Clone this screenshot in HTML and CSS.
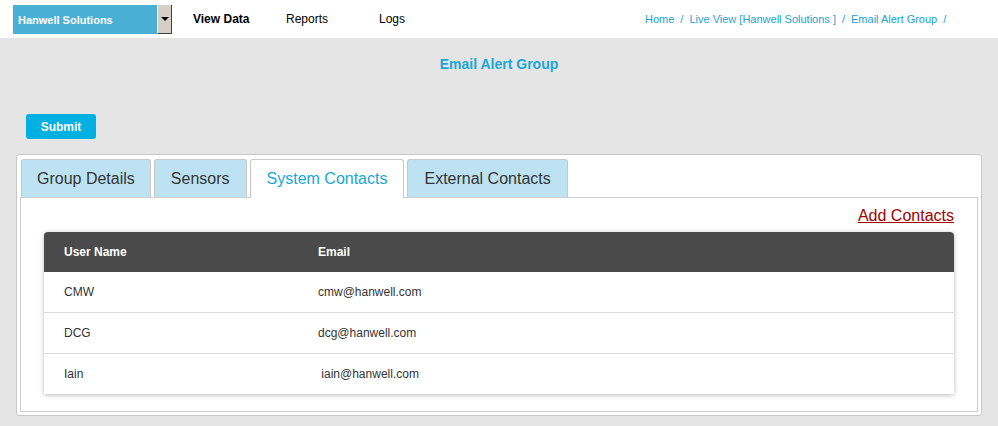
FILE: index.html
```html
<!DOCTYPE html>
<html lang="en">
<head>
    <meta charset="UTF-8">
    <meta name="viewport" content="width=device-width, initial-scale=1.0">
    <title>Email Alert Group</title>
    <link rel="stylesheet" href="styles.css">
</head>
<body>

<div class="topbar">
    <div class="site-select">
        <span class="site-name">Hanwell Solutions</span>
        <span class="site-arrow"><span class="caret"></span></span>
    </div>
    <ul class="nav">
        <li class="nav-item active">View Data</li>
        <li class="nav-item">Reports</li>
        <li class="nav-item">Logs</li>
    </ul>
    <div class="breadcrumb">
        <a href="#">Home</a><span class="sep">/</span>
        <a href="#">Live View [Hanwell Solutions ]</a><span class="sep">/</span>
        <a href="#">Email Alert Group</a><span class="sep">/</span>
    </div>
</div>

<div class="page">
    <h1 class="page-title">Email Alert Group</h1>

    <button class="submit-btn">Submit</button>

    <div class="panel">
        <ul class="tabs">
            <li class="tab">Group Details</li>
            <li class="tab">Sensors</li>
            <li class="tab active">System Contacts</li>
            <li class="tab">External Contacts</li>
        </ul>
        <div class="tab-body">
            <div class="add-row">
                <a href="#" class="add-link">Add Contacts</a>
            </div>
            <table class="contacts">
                <thead>
                    <tr><th class="col-user">User Name</th><th>Email</th></tr>
                </thead>
                <tbody>
                    <tr><td>CMW</td><td>cmw@hanwell.com</td></tr>
                    <tr><td>DCG</td><td>dcg@hanwell.com</td></tr>
                    <tr><td>Iain</td><td>&nbsp;iain@hanwell.com</td></tr>
                </tbody>
            </table>
        </div>
    </div>
</div>

</body>
</html>
```

FILE: styles.css
```css
body {
    margin: 0;
    background-color: #e5e5e5;
    font-family: "Liberation Sans", Arial, sans-serif;
    color: #333;
}

/* top bar */
.topbar {
    display: flex;
    align-items: center;
    height: 38px;
    padding-left: 13px;
    background-color: #fff;
}

.site-select {
    display: flex;
    width: 159px;
    height: 29px;
    margin-top: 1px;
}

.site-name {
    flex: 1;
    display: flex;
    align-items: center;
    padding-left: 5px;
    background-color: #4aafd5;
    color: #fff;
    font-size: 11px;
    font-weight: bold;
}

.site-arrow {
    display: flex;
    align-items: center;
    justify-content: center;
    width: 13px;
    background-color: #d4d0c8;
    border-left: 1px solid #fff;
    border-right: 1px solid #404040;
    border-bottom: 1px solid #404040;
}

.caret {
    width: 0;
    height: 0;
    border-left: 4px solid transparent;
    border-right: 4px solid transparent;
    border-top: 4px solid #000;
}

.nav {
    display: flex;
    list-style: none;
    margin: 0 0 0 21px;
    padding: 0;
}

.nav-item {
    width: 93px;
    font-size: 12px;
    color: #000;
}

.nav-item.active {
    font-weight: bold;
}

.breadcrumb {
    display: flex;
    margin-left: 173px;
    font-size: 11px;
}

.breadcrumb a {
    color: #1ba1d9;
    text-decoration: none;
}

.breadcrumb .sep {
    color: #1ba1d9;
    margin: 0 6px;
}

/* page */
.page {
    padding: 0 16px 0 16px;
}

.page-title {
    margin: 0;
    padding-top: 18px;
    height: 58px;
    text-align: center;
    font-size: 14px;
    color: #1aa6d6;
}

.submit-btn {
    width: 70px;
    height: 25px;
    margin-left: 10px;
    background-color: #00b0e0;
    color: #fff;
    border: none;
    border-radius: 3px;
    font-family: inherit;
    font-size: 12px;
    font-weight: bold;
}

.panel {
    margin-top: 15px;
    width: 958px;
    padding: 4px 3px 3px 3px;
    background-color: #fff;
    border: 1px solid #c8c8c8;
    border-radius: 3px;
}

.tabs {
    display: flex;
    gap: 3px;
    list-style: none;
    margin: 0 0 -1px 1px;
    padding: 0;
}

.tab {
    height: 37px;
    line-height: 37px;
    padding: 0 16px;
    background-color: #bde3f2;
    border: 1px solid #c8c8c8;
    border-bottom: none;
    border-radius: 3px 3px 0 0;
    font-size: 16px;
    color: #333;
}

.tab:first-child {
    padding: 0 15px;
}

.tab.active {
    position: relative;
    height: 38px;
    background-color: #fff;
    color: #1aa6d6;
}

.tab-body {
    padding: 0 23px 17px 23px;
    border: 1px solid #cfcfcf;
}

.add-row {
    padding-top: 9px;
    height: 25px;
    text-align: right;
}

.add-link {
    color: #a00000;
    font-size: 16px;
}

.contacts {
    width: 100%;
    border-collapse: separate;
    border-spacing: 0;
    border-radius: 4px 4px 0 0;
    box-shadow: 0 1px 5px rgba(0, 0, 0, 0.28);
    font-size: 12px;
}

.contacts th {
    height: 40px;
    padding: 0 0 0 20px;
    background-color: #4a4a4a;
    color: #fff;
    text-align: left;
}

.contacts th:first-child {
    border-top-left-radius: 4px;
}

.contacts th:last-child {
    border-top-right-radius: 4px;
}

.contacts .col-user {
    width: 234px;
}

.contacts td {
    height: 40px;
    padding: 0 0 0 20px;
    background-color: #fff;
    color: #333;
}

.contacts tbody tr + tr td {
    border-top: 1px solid #dcdcdc;
}
```
